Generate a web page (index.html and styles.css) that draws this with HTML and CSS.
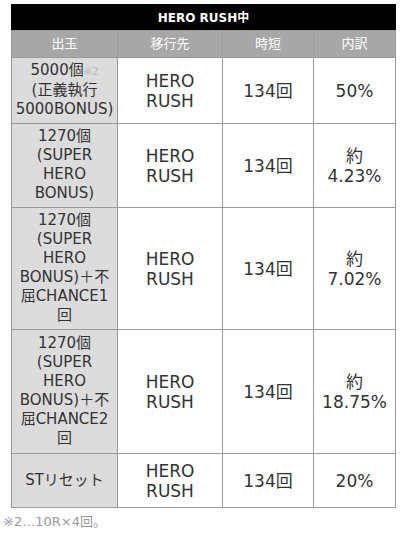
FILE: index.html
```html
<!DOCTYPE html>
<html lang="ja">
<head>
<meta charset="utf-8">
<link rel="stylesheet" href="styles.css">
</head>
<body>
<div class="page">
  <table class="spec">
    <colgroup>
      <col class="c1"><col class="c2"><col class="c3"><col class="c4">
    </colgroup>
    <thead>
      <tr class="title"><th colspan="4">HERO RUSH中</th></tr>
      <tr class="head"><th>出玉</th><th>移行先</th><th>時短</th><th>内訳</th></tr>
    </thead>
    <tbody>
      <tr>
        <td class="first">5000個<span class="note">※2</span><br>(正義執行<br>5000BONUS)</td>
        <td>HERO<br>RUSH</td>
        <td>134回</td>
        <td>50%</td>
      </tr>
      <tr>
        <td class="first">1270個<br>(SUPER<br>HERO<br>BONUS)</td>
        <td>HERO<br>RUSH</td>
        <td>134回</td>
        <td>約<br>4.23%</td>
      </tr>
      <tr>
        <td class="first">1270個<br>(SUPER<br>HERO<br>BONUS)＋不<br>屈CHANCE1<br>回</td>
        <td>HERO<br>RUSH</td>
        <td>134回</td>
        <td>約<br>7.02%</td>
      </tr>
      <tr class="tall">
        <td class="first">1270個<br>(SUPER<br>HERO<br>BONUS)＋不<br>屈CHANCE2<br>回</td>
        <td>HERO<br>RUSH</td>
        <td>134回</td>
        <td>約<br>18.75%</td>
      </tr>
      <tr class="last">
        <td class="first">STリセット</td>
        <td>HERO<br>RUSH</td>
        <td>134回</td>
        <td>20%</td>
      </tr>
    </tbody>
  </table>
  <p class="foot">※2…10R×4回。</p>
</div>
</body>
</html>
```
FILE: styles.css
```css
html, body {
  margin: 0;
  padding: 0;
  background: #fff;
}
body {
  font-family: "DejaVu Sans", "Noto Sans CJK JP", sans-serif;
  color: #333;
}
.page {
  padding: 4px 0 0 3px;
}
.spec {
  border-collapse: collapse;
  table-layout: fixed;
  width: 384px;
  margin-left: 8px;
}
.c1 { width: 106px; }
.c2 { width: 105px; }
.c3 { width: 91px; }
.c4 { width: 82px; }
.spec th, .spec td {
  border: 1px solid #9a9a9a;
  text-align: center;
  vertical-align: middle;
  padding: 0 2px;
}
.title th {
  background: #000;
  color: #fff;
  font-weight: bold;
  font-size: 12px;
  height: 25px;
  line-height: 14px;
  border-color: #000 #000 #9a9a9a #000;
}
.head th {
  background: #a7a7a7;
  color: #fff;
  font-weight: normal;
  font-size: 13px;
  height: 26px;
  line-height: 16px;
}
.spec td {
  font-size: 17px;
  line-height: 20px;
  padding-top: 4px;
  padding-bottom: 4px;
}
.spec td.first {
  background: #dcdcdc;
  font-size: 15px;
  line-height: 19px;
  padding-top: 3px;
  padding-bottom: 4px;
}
.tall td.first {
  padding-top: 4px;
  padding-bottom: 5px;
}
.last td {
  height: 45px;
}
.note {
  font-size: 10px;
  color: #bbb;
}
.foot {
  margin: 5px 0 0;
  font-size: 13px;
  line-height: 18px;
  color: #999;
}
```
